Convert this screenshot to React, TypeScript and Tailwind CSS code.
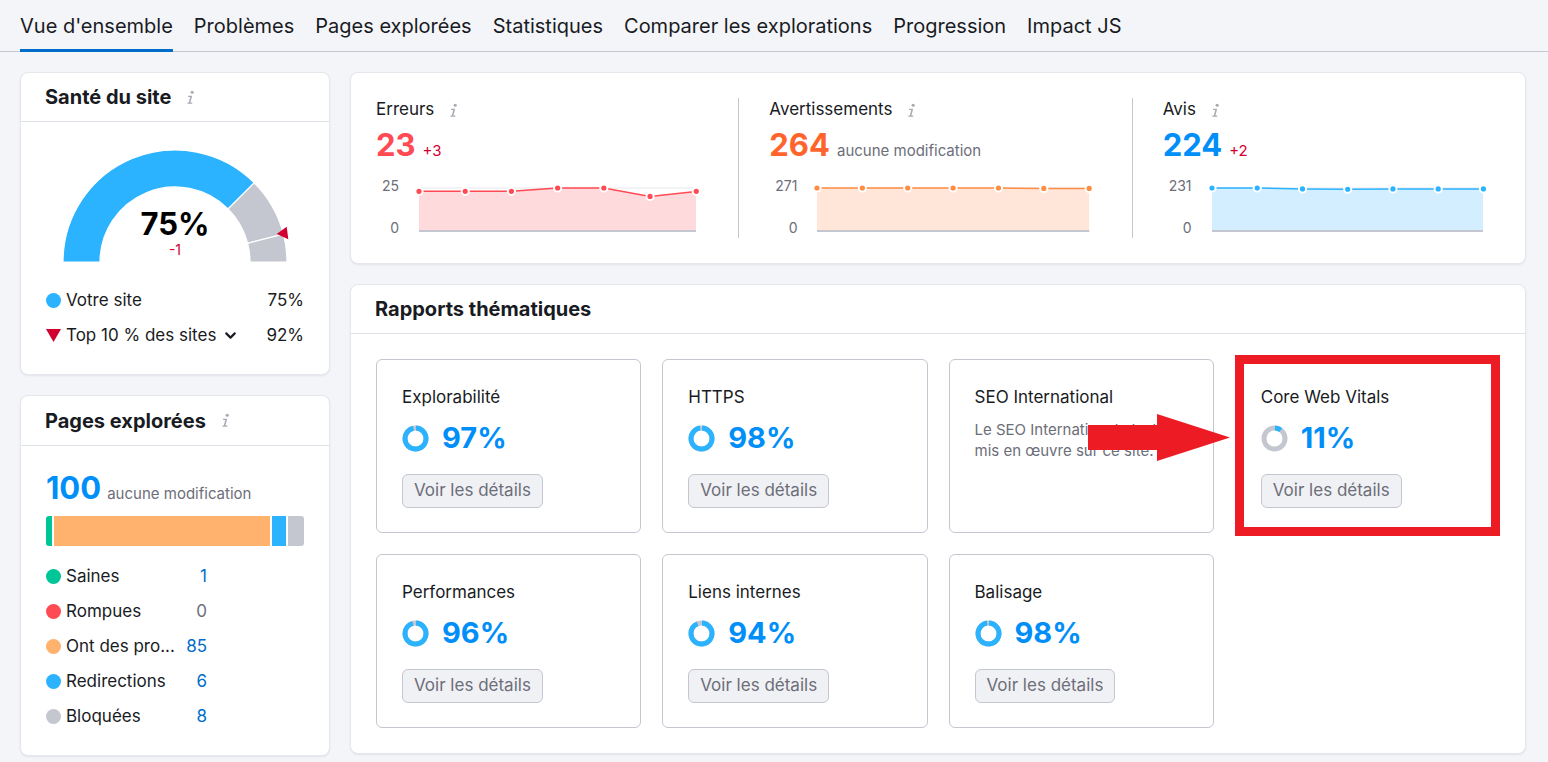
import { ChevronDown } from 'lucide-react'

const tabs = ["Vue d'ensemble", 'Problèmes', 'Pages explorées', 'Statistiques', 'Comparer les explorations', 'Progression', 'Impact JS']

const InfoIcon = ({ className = '' }: { className?: string }) => (
    <svg viewBox="0 0 16 16" className={className} fill="currentColor">
        <circle cx="9.8" cy="2.4" r="1.7" />
        <path d="M5.6 6.2h4.2l-1.9 7.1h2.2l-.3 1.3H4.6l.3-1.3h1.3l1.5-5.8H5.3z" />
    </svg>
)

// annular sector, angles in degrees (math orientation), a0 > a1
const C = 112
const pt = (r: number, a: number) => [C + r * Math.cos((a * Math.PI) / 180), C - r * Math.sin((a * Math.PI) / 180)]
const sector = (r1: number, r2: number, a0: number, a1: number) => {
    const [x0, y0] = pt(r2, a0)
    const [x1, y1] = pt(r2, a1)
    const [x2, y2] = pt(r1, a1)
    const [x3, y3] = pt(r1, a0)
    return `M${x0} ${y0} A${r2} ${r2} 0 0 1 ${x1} ${y1} L${x2} ${y2} A${r1} ${r1} 0 0 0 ${x3} ${y3}Z`
}

const Gauge = () => (
    <svg width="224" height="112" viewBox="0 0 224 112" className="overflow-visible">
        <path d={sector(75, 112, 180, 45)} fill="#2bb3ff" stroke="#fff" strokeWidth="1.2" />
        <path d={sector(75, 112, 45, 14.4)} fill="#c4c7cf" stroke="#fff" strokeWidth="1.2" />
        <path d={sector(75, 112, 14.4, 0)} fill="#c4c7cf" stroke="#fff" strokeWidth="1.2" />
        <polygon points="213.7,84 223.7,76.7 225.3,89.3" fill="#d1002f" />
        <text x="112" y="77" textAnchor="middle" dominantBaseline="middle" fontSize="31" fontWeight="700" fill="#000" fontFamily="Inter, sans-serif">75%</text>
        <text x="112" y="101" textAnchor="middle" dominantBaseline="middle" fontSize="14" fill="#d1002f" fontFamily="Inter, sans-serif">-1</text>
    </svg>
)

const Spark = ({ values, max, line, fill }: { values: number[]; max: number; line: string; fill: string }) => {
    const top = 12
    const base = 54
    const ys = values.map(v => base - (v / max) * (base - top))
    const xs = values.map((_, i) => (i / (values.length - 1)) * 100)
    const pts = xs.map((x, i) => `${x},${ys[i]}`).join(' ')
    return (
        <div className="relative flex-1 mr-[17px] h-[62px]">
            <svg className="absolute inset-0 w-full h-full" viewBox="0 0 100 62" preserveAspectRatio="none">
                <line x1="0" x2="100" y1={top} y2={top} stroke="#e6e7ec" strokeWidth="1" vectorEffect="non-scaling-stroke" />
                <polygon points={`0,${base} ${pts} 100,${base}`} fill={fill} />
                <polyline points={pts} fill="none" stroke={line} strokeWidth="1.5" vectorEffect="non-scaling-stroke" />
                <line x1="0" x2="100" y1={base + 1} y2={base + 1} stroke="#c4c7cf" strokeWidth="2" vectorEffect="non-scaling-stroke" />
            </svg>
            <svg className="absolute inset-0 w-full h-full overflow-visible">
                {xs.map((x, i) => (
                    <circle key={i} cx={`${x}%`} cy={ys[i]} r="3.6" fill={line} stroke="#fff" strokeWidth="2" />
                ))}
            </svg>
        </div>
    )
}

const Donut = ({ pct }: { pct: number }) => {
    const r = 10.5
    const circ = 2 * Math.PI * r
    const blue = (pct / 100) * circ
    return (
        <svg width="27" height="27" viewBox="0 0 27 27" className="-rotate-90">
            <circle cx="13.5" cy="13.5" r={r} fill="none" stroke="#c4c7cf" strokeWidth="5" />
            <circle cx="13.5" cy="13.5" r={r} fill="none" stroke="#2bb3ff" strokeWidth="5"
                strokeDasharray={`${Math.max(blue - 1, 0)} ${circ}`} strokeDashoffset={-0.5} />
        </svg>
    )
}

const Stat = ({ title, value, color, note, noteColor, scale, values, line, fill }: {
    title: string; value: string; color: string; note: string; noteColor: string; scale: string; values: number[]; line: string; fill: string
}) => (
    <div className="flex-1 flex flex-col">
        <div className="flex items-center gap-[12px] h-[24px] text-[17px] text-[#191b23]">
            {title}
            <InfoIcon className="w-[15px] h-[15px] text-[#a8abb3]" />
        </div>
        <div className="flex items-baseline gap-[7px] mt-[5px] leading-[36px]">
            <span className={`text-[31px] font-bold ${color}`}>{value}</span>
            <span className={`text-[15px] ${noteColor}`}>{note}</span>
        </div>
        <div className="flex mt-[7px] h-[62px]">
            <div className="flex flex-col justify-between items-end pl-[6px] text-[14px] leading-[20px] text-[#6c6e79]">
                <span>{scale}</span>
                <span>0</span>
            </div>
            <div className="w-[20px]" />
            <Spark values={values} max={Number(scale)} line={line} fill={fill} />
        </div>
    </div>
)

const tiles = [
    { name: 'Explorabilité', pct: 97 },
    { name: 'HTTPS', pct: 98 },
    { name: 'SEO International', pct: null },
    { name: 'Core Web Vitals', pct: 11 },
    { name: 'Performances', pct: 96 },
    { name: 'Liens internes', pct: 94 },
    { name: 'Balisage', pct: 98 },
]

const pages = [
    { label: 'Saines', value: '1', dot: 'bg-[#00c596]', blue: true },
    { label: 'Rompues', value: '0', dot: 'bg-[#ff4953]', blue: false },
    { label: 'Ont des pro...', value: '85', dot: 'bg-[#ffb26e]', blue: true },
    { label: 'Redirections', value: '6', dot: 'bg-[#2bb3ff]', blue: true },
    { label: 'Bloquées', value: '8', dot: 'bg-[#c4c7cf]', blue: true },
]

const card = 'bg-white rounded-lg border border-[#e6e7ec] shadow-[0_1px_2px_rgba(25,27,35,0.08)]'
const cardHeader = 'flex items-center gap-[12px] px-[24px] border-b border-[#e0e1e9] text-[20px] font-bold text-[#191b23]'

export default function App() {
    return (
        <div className="min-h-screen bg-[#f4f5f9] font-[family-name:Inter,sans-serif] text-[#191b23]">
            <nav className="flex gap-[21px] px-[20px] h-[52px] border-b border-[#c4c7cf]">
                {tabs.map((t, i) => (
                    <div key={t}
                        className={`flex items-center text-[20px] -mb-px ${i === 0 ? 'border-b-[3px] border-[#006dca] pt-[3px]' : ''}`}>
                        {t}
                    </div>
                ))}
            </nav>

            <div className="flex gap-[20px] pl-[20px] pr-[22px] pt-[20px] pb-[8px]">
                <div className="w-[310px] flex flex-col gap-[20px]">
                    <div className={card}>
                        <div className={`${cardHeader} h-[49px]`}>
                            Santé du site
                            <InfoIcon className="w-[15px] h-[15px] text-[#a8abb3]" />
                        </div>
                        <div className="px-[25px] pb-[21px]">
                            <div className="flex justify-center mt-[28px]">
                                <Gauge />
                            </div>
                            <div className="mt-[21px] text-[17px]">
                                <div className="flex items-center h-[35px]">
                                    <span className="w-[15px] h-[15px] rounded-full bg-[#2bb3ff] mr-[5px]" />
                                    <span>Votre site</span>
                                    <span className="ml-auto">75%</span>
                                </div>
                                <div className="flex items-center h-[35px]">
                                    <svg width="15" height="13" viewBox="0 0 15 13" className="mr-[5px]">
                                        <polygon points="0,0 15,0 7.5,13" fill="#d1002f" />
                                    </svg>
                                    <span>Top 10 % des sites</span>
                                    <ChevronDown className="w-[17px] h-[17px] ml-[6px]" strokeWidth={3} />
                                    <span className="ml-auto">92%</span>
                                </div>
                            </div>
                        </div>
                    </div>

                    <div className={card}>
                        <div className={`${cardHeader} h-[50px]`}>
                            Pages explorées
                            <InfoIcon className="w-[15px] h-[15px] text-[#a8abb3]" />
                        </div>
                        <div className="px-[25px] pt-[24px] pb-[21px]">
                            <div className="flex items-baseline gap-[6px] leading-[36px]">
                                <span className="text-[31px] font-bold text-[#008ff8]">100</span>
                                <span className="text-[15px] text-[#6c6e79]">aucune modification</span>
                            </div>
                            <div className="flex h-[30px] mt-[4px] rounded-[3px] overflow-hidden gap-[2px]">
                                <div className="w-[6px] bg-[#00c596]" />
                                <div className="w-[216px] bg-[#ffb26e]" />
                                <div className="w-[14px] bg-[#2bb3ff]" />
                                <div className="flex-1 bg-[#c4c7cf]" />
                            </div>
                            <div className="mt-[13px] text-[17px]">
                                {pages.map(p => (
                                    <div key={p.label} className="flex items-center h-[35px] w-[161px]">
                                        <span className={`w-[15px] h-[15px] rounded-full shrink-0 mr-[5px] ${p.dot}`} />
                                        <span className="whitespace-nowrap">{p.label}</span>
                                        <span className={`ml-auto ${p.blue ? 'text-[#006dca]' : 'text-[#6c6e79]'}`}>{p.value}</span>
                                    </div>
                                ))}
                            </div>
                        </div>
                    </div>
                </div>

                <div className="flex-1 flex flex-col gap-[20px]">
                    <div className={`${card} flex px-[25px] py-[25px]`}>
                        <Stat title="Erreurs" value="23" color="text-[#ff4953]" note="+3" noteColor="text-[#d1002f]"
                            scale="25" values={[23, 23, 23, 25, 25, 20, 23]} line="#ff4953" fill="#ffdadd" />
                        <div className="w-px bg-[#c4c7cf] ml-[25px] mr-[30px]" />
                        <Stat title="Avertissements" value="264" color="text-[#ff642d]" note="aucune modification" noteColor="text-[#6c6e79]"
                            scale="271" values={[271, 271, 271, 271, 271, 268, 268]} line="#ff8c43" fill="#ffe6d9" />
                        <div className="w-px bg-[#c4c7cf] ml-[25px] mr-[30px]" />
                        <Stat title="Avis" value="224" color="text-[#008ff8]" note="+2" noteColor="text-[#d1002f]"
                            scale="231" values={[231, 231, 226, 224, 226, 226, 226]} line="#2bb3ff" fill="#d3efff" />
                    </div>

                    <div className={card}>
                        <div className={`${cardHeader} h-[49px]`}>Rapports thématiques</div>
                        <div className="grid grid-cols-4 gap-[21px] p-[25px]">
                            {tiles.map(t => (
                                <div key={t.name} className="relative h-[174px] rounded-md border border-[#c4c7cf] px-[25px] pt-[25px]">
                                    <div className="text-[17px] leading-[24px]">{t.name}</div>
                                    {t.pct === null ? (
                                        <>
                                            <p className="mt-[10px] text-[15px] leading-[21px] text-[#6c6e79]">
                                                Le SEO International n'est pas mis en œuvre sur ce site.
                                            </p>
                                            <svg width="142" height="48" viewBox="0 0 142 48" className="absolute left-[138px] top-[54px]">
                                                <polygon points="0,11 69,11 69,0 142,23.5 69,47 69,36 0,36" fill="#ed1c24" />
                                            </svg>
                                        </>
                                    ) : (
                                        <>
                                            <div className="flex items-center gap-[13px] mt-[12px] h-[34px]">
                                                <Donut pct={t.pct} />
                                                <span className="text-[29px] font-bold text-[#008ff8]">{t.pct}%</span>
                                            </div>
                                            <button className="mt-[19px] h-[34px] px-[11px] rounded-md border border-[#c4c7cf] bg-[#f0f1f4] text-[17px] text-[#6c6e79]">
                                                Voir les détails
                                            </button>
                                        </>
                                    )}
                                    {t.name === 'Core Web Vitals' && (
                                        <div className="absolute -left-px -right-px -top-[5px] -bottom-[4px] border-[9px] border-[#ed1c24] pointer-events-none" />
                                    )}
                                </div>
                            ))}
                        </div>
                    </div>
                </div>
            </div>
        </div>
    )
}
